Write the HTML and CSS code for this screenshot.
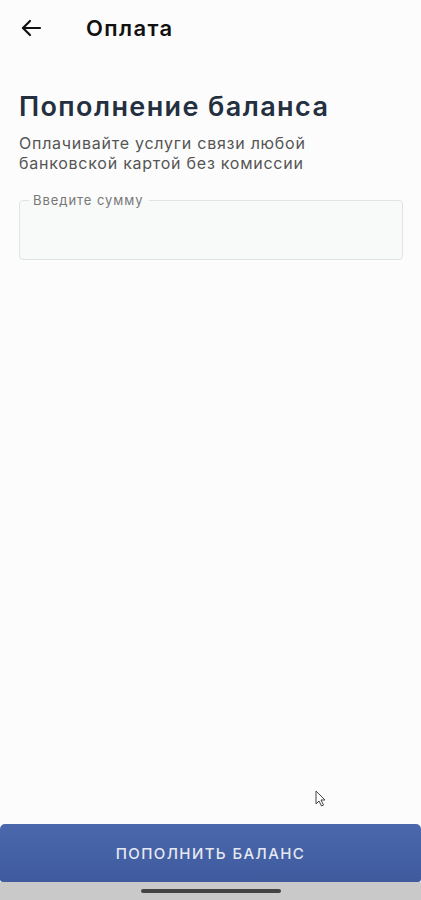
FILE: index.html
```html
<!DOCTYPE html>
<html lang="ru">
<head>
    <meta charset="UTF-8">
    <meta name="viewport" content="width=device-width, initial-scale=1.0">
    <title>Оплата</title>
    <link rel="stylesheet" href="styles.css">
</head>
<body>
    <header class="topbar">
        <button class="back-btn" aria-label="Назад">
            <svg width="22" height="18" viewBox="0 0 22 18" fill="none" stroke="#111" stroke-width="2.2" stroke-linecap="round" stroke-linejoin="round">
                <path d="M20 9H3"/>
                <path d="M10 2L3 9l7 7"/>
            </svg>
        </button>
        <h2 class="topbar-title">Оплата</h2>
    </header>

    <main class="content">
        <h1 class="page-title">Пополнение баланса</h1>
        <p class="page-desc">Оплачивайте услуги связи любой банковской картой без комиссии</p>

        <fieldset class="amount-field">
            <legend>Введите сумму</legend>
            <input type="text" class="amount-input">
        </fieldset>
    </main>

    <!-- mouse pointer from the recording -->
    <svg class="pointer" width="12" height="18" viewBox="0 0 12 18">
        <path d="M1 1v13l3-3 2.5 5 2-1-2.5-5H10z" fill="#fff" stroke="#444" stroke-width="1"/>
    </svg>

    <footer class="bottom">
        <button class="pay-btn">ПОПОЛНИТЬ БАЛАНС</button>
        <div class="nav-strip"><span class="home-bar"></span></div>
    </footer>
</body>
</html>
```

FILE: styles.css
```css
body {
    margin: 0;
    height: 900px;
    background-color: #fcfcfc;
    font-family: 'Inter', 'Noto Sans', sans-serif;
    color: #1d2939;
    display: flex;
    flex-direction: column;
    position: relative;
}

.topbar {
    height: 56px;
    display: flex;
    align-items: center;
    padding: 0 0 0 20px;
}

.back-btn {
    border: none;
    background: transparent;
    padding: 0;
    width: 26px;
    height: 22px;
    display: flex;
    align-items: center;
}

.topbar-title {
    margin: 0 0 0 40px;
    font-size: 22px;
    font-weight: 600;
    color: #111;
    letter-spacing: 1.4px;
}

.content {
    flex: 1;
    padding: 34px 18px 0 19px;
}

.page-title {
    margin: 0;
    font-size: 27px;
    font-weight: 600;
    color: #24303f;
    letter-spacing: 1.4px;
    line-height: 34px;
}

.page-desc {
    margin: 9px 0 0;
    font-size: 16px;
    line-height: 20px;
    color: #555;
    letter-spacing: 0.75px;
    max-width: 320px;
}

.amount-field {
    margin: 20px 0 0;
    padding: 0 9px;
    height: 65px;
    border: 1px solid #dfe5e7;
    border-radius: 4px;
    background-color: #f8fafa;
}

.amount-field legend {
    font-size: 13px;
    color: #777;
    padding: 0 5px 0 4px;
    line-height: 14px;
    letter-spacing: 0.95px;
}

.amount-input {
    border: none;
    background: transparent;
    width: 100%;
    height: 36px;
    outline: none;
    font-size: 16px;
}

.pointer {
    position: absolute;
    left: 315px;
    top: 790px;
}

.pay-btn {
    display: block;
    width: 100%;
    height: 58px;
    border: none;
    border-radius: 5px 5px 3px 3px;
    background: linear-gradient(#4c68ad, #3f5b9e);
    color: #e6e9f2;
    font-family: 'Inter', 'Noto Sans', sans-serif;
    font-size: 15px;
    font-weight: 500;
    letter-spacing: 1.4px;
}

.nav-strip {
    height: 18px;
    background-color: #c9c9c9;
    display: flex;
    justify-content: center;
    align-items: center;
}

.home-bar {
    width: 140px;
    height: 4px;
    border-radius: 2px;
    background-color: #444;
}
```
